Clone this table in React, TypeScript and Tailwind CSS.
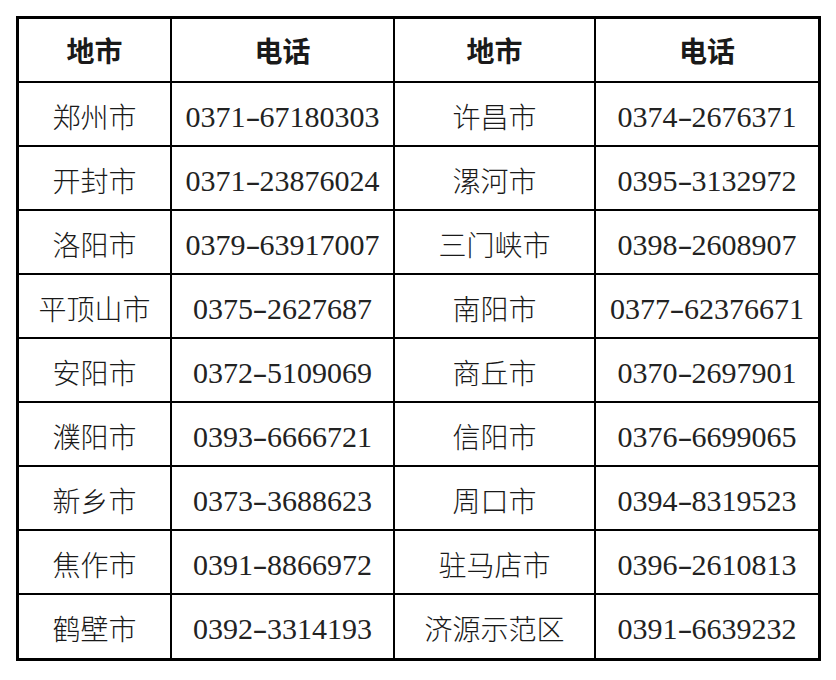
import React from 'react';

interface Row {
  city1: string;
  phone1: string;
  city2: string;
  phone2: string;
}

const rows: Row[] = [
  { city1: '郑州市', phone1: '0371-67180303', city2: '许昌市', phone2: '0374-2676371' },
  { city1: '开封市', phone1: '0371-23876024', city2: '漯河市', phone2: '0395-3132972' },
  { city1: '洛阳市', phone1: '0379-63917007', city2: '三门峡市', phone2: '0398-2608907' },
  { city1: '平顶山市', phone1: '0375-2627687', city2: '南阳市', phone2: '0377-62376671' },
  { city1: '安阳市', phone1: '0372-5109069', city2: '商丘市', phone2: '0370-2697901' },
  { city1: '濮阳市', phone1: '0393-6666721', city2: '信阳市', phone2: '0376-6699065' },
  { city1: '新乡市', phone1: '0373-3688623', city2: '周口市', phone2: '0394-8319523' },
  { city1: '焦作市', phone1: '0391-8866972', city2: '驻马店市', phone2: '0396-2610813' },
  { city1: '鹤壁市', phone1: '0392-3314193', city2: '济源示范区', phone2: '0391-6639232' },
];

const cjk = "font-['Noto_Sans_CJK_SC','Noto_Sans_CJK_JP',sans-serif]";
const num = "font-['Liberation_Serif','Noto_Sans_CJK_SC',serif]";

const Cell: React.FC<{ children: React.ReactNode; last?: boolean; bottom?: boolean; className?: string }> = ({
  children,
  last,
  bottom,
  className = '',
}) => (
  <div
    className={`flex items-center justify-center border-black ${last ? '' : 'border-r-2'} ${
      bottom ? '' : 'border-b-2'
    } ${className}`}
  >
    {children}
  </div>
);

// SimSun style long hyphen between area code and number
const Phone: React.FC<{ value: string }> = ({ value }) => {
  const [code, rest] = value.split('-');
  return (
    <span className="whitespace-nowrap">
      {code}
      <span className="inline-block mx-[2px] scale-x-150">-</span>
      {rest}
    </span>
  );
};

export default function App() {
  return (
    <div className="min-h-[680px] w-[836px] bg-white pt-[16px] pl-[16px]">
      <div className="grid w-[805px] grid-cols-[153px_223px_201px_222px] border-[3px] border-black text-[#1a1a1a]">
        <Cell className={`h-[64px] ${cjk} text-[28px] font-bold`}>地市</Cell>
        <Cell className={`h-[64px] ${cjk} text-[28px] font-bold`}>电话</Cell>
        <Cell className={`h-[64px] ${cjk} text-[28px] font-bold`}>地市</Cell>
        <Cell last className={`h-[64px] ${cjk} text-[28px] font-bold`}>电话</Cell>
        {rows.map((r, i) => {
          const isLast = i === rows.length - 1;
          const h = isLast ? 'h-[63px]' : 'h-[64px]';
          return (
            <React.Fragment key={r.city1}>
              <Cell bottom={isLast} className={`${h} ${cjk} text-[28px] font-light pt-[3px]`}>
                {r.city1}
              </Cell>
              <Cell bottom={isLast} className={`${h} ${num} text-[30px] pt-[4px] text-[#222]`}>
                <Phone value={r.phone1} />
              </Cell>
              <Cell bottom={isLast} className={`${h} ${cjk} text-[28px] font-light pt-[3px]`}>
                {r.city2}
              </Cell>
              <Cell bottom={isLast} last className={`${h} ${num} text-[30px] pt-[4px] text-[#222]`}>
                <Phone value={r.phone2} />
              </Cell>
            </React.Fragment>
          );
        })}
      </div>
    </div>
  );
}
